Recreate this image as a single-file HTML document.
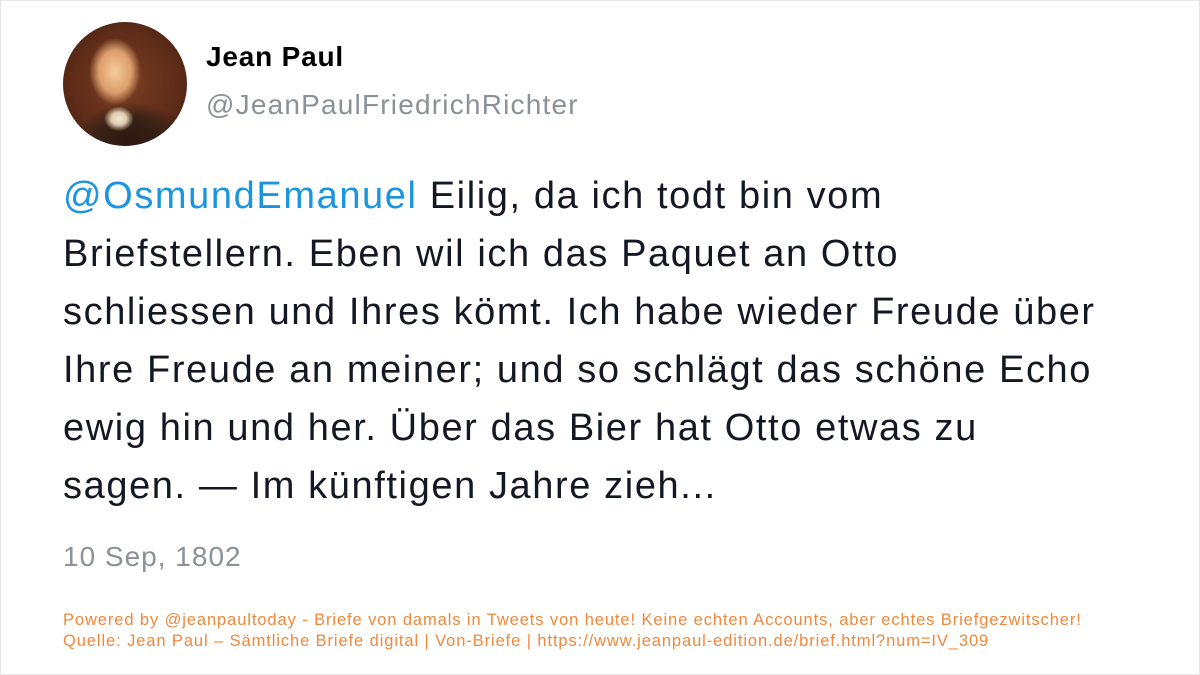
<!DOCTYPE html>
<html><head><meta charset="utf-8"><style>
html,body{margin:0;padding:0}
body{width:1200px;height:675px;background:#fff;position:relative;overflow:hidden;font-family:"Liberation Sans",sans-serif;box-sizing:border-box;border:1px solid #e6e6e6}
.av{position:absolute;left:62px;top:21px;width:124px;height:124px;border-radius:50%;background:radial-gradient(ellipse 12% 10% at 45% 78%,#f4ead8 0%,#e0cdb0 50%,transparent 100%),radial-gradient(ellipse 26% 34% at 42% 40%,#f6cc9a 0%,#dc9e6c 50%,transparent 80%),radial-gradient(ellipse 45% 30% at 55% 95%,#2a1810 0%,#3a2216 60%,transparent 100%),radial-gradient(circle at 50% 50%,#7a3e22 0%,#5e2c18 60%,#3a1a10 100%)}
.name{position:absolute;left:205px;top:40px;font-size:28px;font-weight:bold;color:#000;letter-spacing:0.8px}
.handle{position:absolute;left:205px;top:88px;font-size:28px;color:#8a9199;letter-spacing:1.2px}
.text{position:absolute;left:62px;top:166px;font-size:38px;line-height:58px;color:#141823;white-space:nowrap;letter-spacing:1.6px}
.text a{color:#1b95e0;text-decoration:none}
.date{position:absolute;left:62px;top:540px;font-size:28px;color:#8a9199;letter-spacing:1px}
.foot{position:absolute;left:62px;top:609px;font-size:16.5px;line-height:21px;color:#f0883a;white-space:nowrap;letter-spacing:0.9px}
</style></head><body>
<div class="av"></div>
<div class="name">Jean Paul</div>
<div class="handle">@JeanPaulFriedrichRichter</div>
<div class="text"><a>@OsmundEmanuel</a> Eilig, da ich todt bin vom<br>Briefstellern. Eben wil ich das Paquet an Otto<br>schliessen und Ihres kömt. Ich habe wieder Freude über<br>Ihre Freude an meiner; und so schlägt das schöne Echo<br>ewig hin und her. Über das Bier hat Otto etwas zu<br>sagen. — Im künftigen Jahre zieh...</div>
<div class="date">10 Sep, 1802</div>
<div class="foot">Powered by @jeanpaultoday - Briefe von damals in Tweets von heute! Keine echten Accounts, aber echtes Briefgezwitscher!<br>Quelle: Jean Paul – Sämtliche Briefe digital | Von-Briefe | https://www.jeanpaul-edition.de/brief.html?num=IV_309</div>
</body></html>
